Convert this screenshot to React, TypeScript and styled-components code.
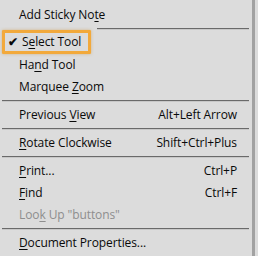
import React from 'react';
import styled, { createGlobalStyle } from 'styled-components';

const Global = createGlobalStyle`
  html, body { margin: 0; padding: 0; background: #dcdcdc; }
  body { font-family: "Open Sans", "Noto Sans", sans-serif; }
`;

const Menu = styled.div`
  width: 255px;
  height: 256px;
  box-sizing: border-box;
  background: #dcdcdc;
  border-right: 3px solid #a2a2a2;
  padding-top: 3px;
  display: flex;
  flex-direction: column;
  overflow: hidden;
`;

const Row = styled.div<{ $disabled?: boolean }>`
  height: 22px;
  display: flex;
  align-items: center;
  padding: 0 15px 0 19px;
  font-size: 12px;
  color: ${p => (p.$disabled ? '#8e8e8e' : '#0a0a0a')};
  letter-spacing: -0.1px;
`;

const Label = styled.span`
  flex: 1;
  white-space: nowrap;
`;

const Shortcut = styled.span`
  white-space: nowrap;
`;

const Key = styled.span`
  text-decoration: underline;
  text-underline-offset: 2px;
`;

const Separator = styled.div<{ $inset?: number }>`
  height: 6px;
  display: flex;
  align-items: center;
  padding-left: ${p => p.$inset ?? 2}px;
  padding-right: 3px;
  &::after {
    content: '';
    flex: 1;
    height: 1px;
    background: #6a6a6a;
    box-shadow: 0 1px 0 #c8c8c8;
  }
`;

const Callout = styled.span`
  display: inline-flex;
  align-items: center;
  height: 18px;
  margin: -1px 0 0 -17px;
  padding: 0 7px 0 3px;
  border: 3px solid #f2a93b;
  border-radius: 1px;
  box-shadow: 0 0 3px rgba(200, 140, 40, 0.5);
`;

const Check = styled.span`
  width: 14px;
  font-size: 12px;
  font-weight: 700;
  line-height: 1;
`;

type Item = { label: React.ReactNode; shortcut?: string; disabled?: boolean };

const u = (s: string) => <Key>{s}</Key>;

const groups: Item[][] = [
  [{ label: <>Add Sticky No{u('t')}e</> }],
  [
    { label: <>S{u('e')}lect Tool</> },
    { label: <>Ha{u('n')}d Tool</> },
    { label: <>Marquee {u('Z')}oom</> },
  ],
  [{ label: <>Previous {u('V')}iew</>, shortcut: 'Alt+Left Arrow' }],
  [{ label: <>{u('R')}otate Clockwise</>, shortcut: 'Shift+Ctrl+Plus' }],
  [
    { label: <>{u('P')}rint...</>, shortcut: 'Ctrl+P' },
    { label: <>{u('F')}ind</>, shortcut: 'Ctrl+F' },
    { label: <>Loo{u('k')} Up "buttons"</>, disabled: true },
  ],
  [{ label: <>{u('D')}ocument Properties...</> }],
];

export default function App() {
  return (
    <>
      <Global />
      <Menu>
        {groups.map((g, gi) => (
          <React.Fragment key={gi}>
            {gi > 0 && <Separator $inset={gi === 1 ? 97 : 2} />}
            {g.map((it, i) => (
              <Row key={i} $disabled={it.disabled}>
                {gi === 1 && i === 0 ? (
                  <Callout>
                    <Check>✔</Check>
                    {it.label}
                  </Callout>
                ) : (
                  <Label>{it.label}</Label>
                )}
                {it.shortcut && <Shortcut>{it.shortcut}</Shortcut>}
              </Row>
            ))}
          </React.Fragment>
        ))}
      </Menu>
    </>
  );
}
